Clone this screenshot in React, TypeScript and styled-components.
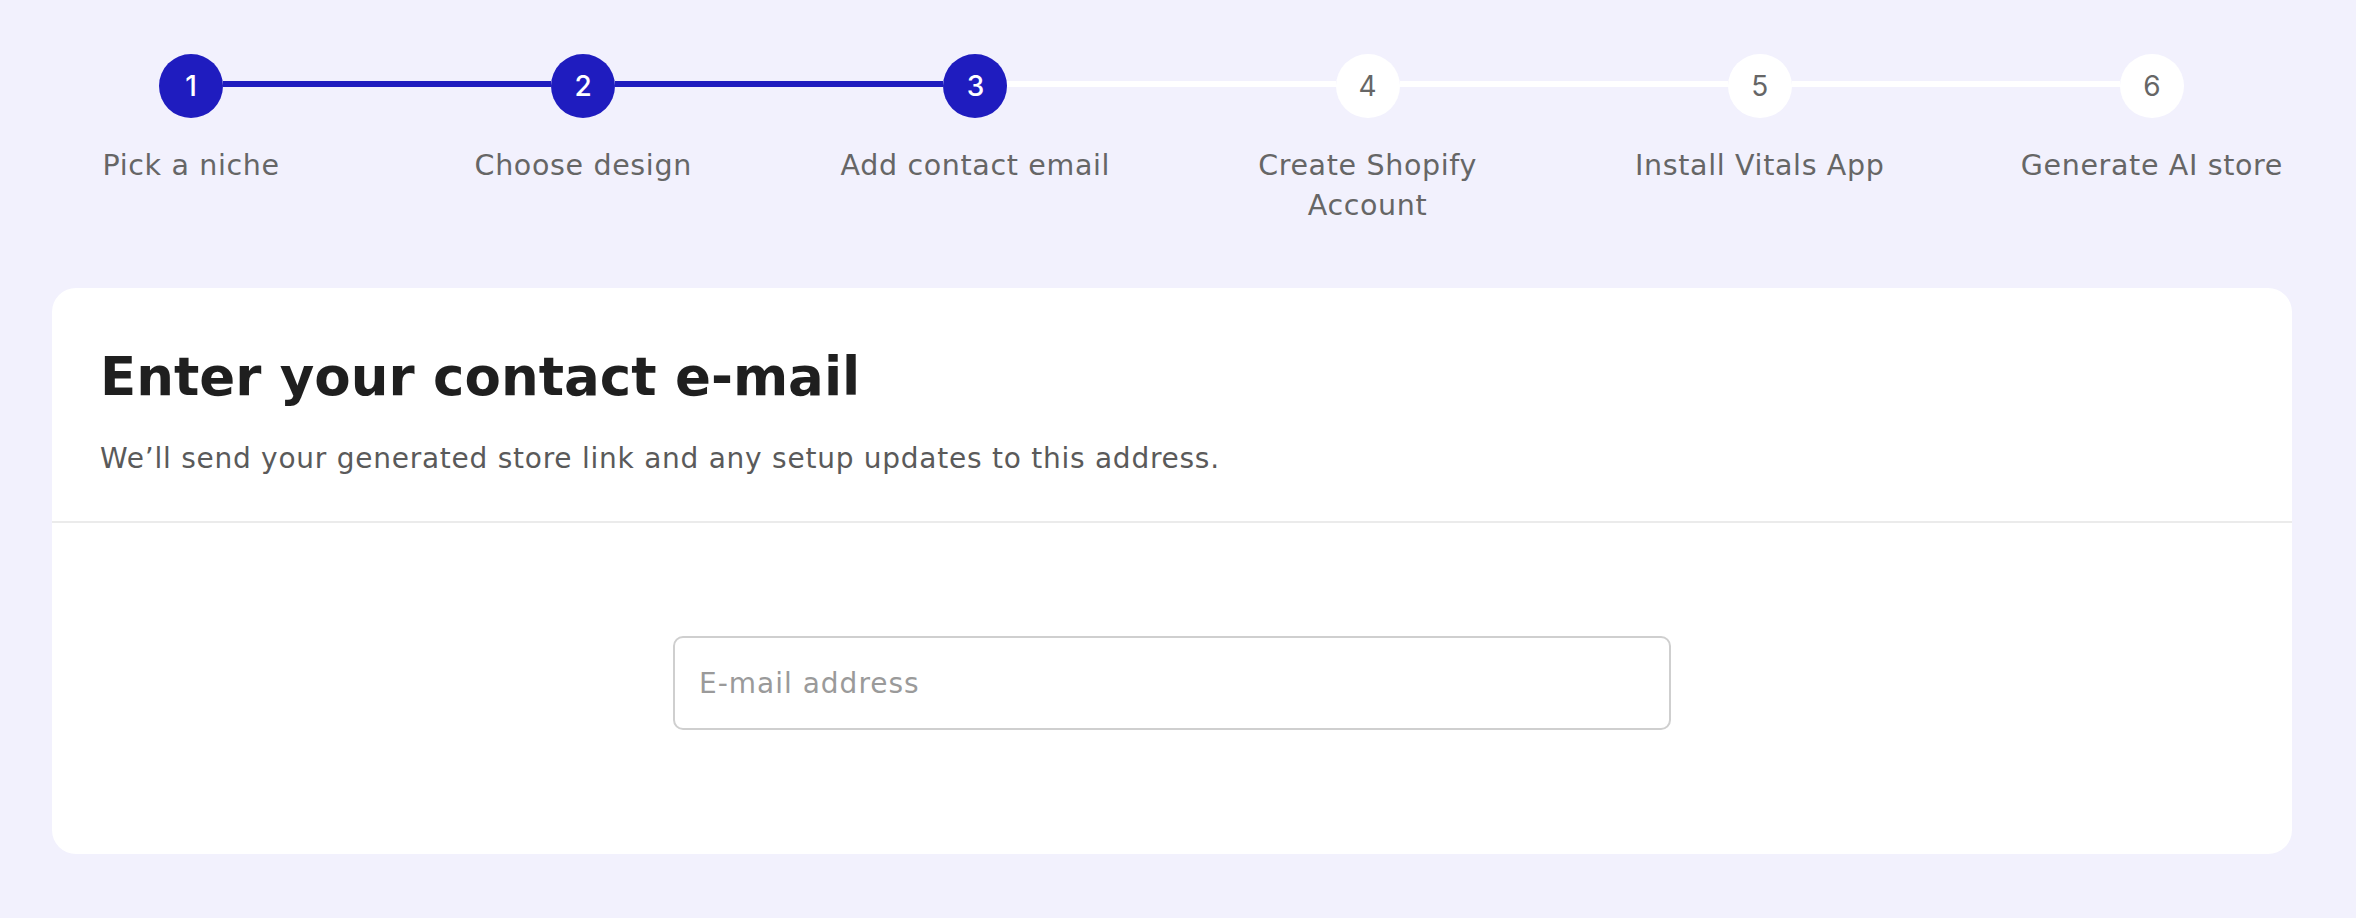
import React from "react";
import styled, { createGlobalStyle } from "styled-components";

const Global = createGlobalStyle`
  html, body { margin: 0; padding: 0; background: #F2F1FD; }
  body { font-family: "DejaVu Sans", "Noto Sans", sans-serif; }
  * { box-sizing: border-box; }
`;

const Page = styled.main`
  min-height: 918px;
  padding-top: 54px;
  padding-bottom: 64px;
`;

const Stepper = styled.ol`
  list-style: none;
  margin: 0 8px 0 -5px;
  padding: 0;
  display: grid;
  grid-template-columns: repeat(6, 1fr);
`;

const Step = styled.li`
  display: flex;
  flex-direction: column;
  align-items: center;
`;

const Track = styled.div`
  display: flex;
  align-self: stretch;
  align-items: flex-start;
`;

type Tone = "done" | "todo" | "none";

const Segment = styled.span<{ $tone: Tone }>`
  flex: 1;
  height: 6px;
  margin-top: 27px;
  background: ${(p) =>
    p.$tone === "done" ? "#1F1CBF" : p.$tone === "todo" ? "#FFFFFF" : "transparent"};
`;

const Dot = styled.span<{ $active: boolean }>`
  flex: none;
  width: 64px;
  height: 64px;
  border-radius: 50%;
  display: flex;
  align-items: center;
  justify-content: center;
  background: ${(p) => (p.$active ? "#1F1CBF" : "#FFFFFF")};
  color: ${(p) => (p.$active ? "#FFFFFF" : "#666666")};
  font-family: Inter, "DejaVu Sans", sans-serif;
  font-size: 28px;
  font-weight: ${(p) => (p.$active ? 500 : 400)};
`;

const Label = styled.span`
  margin-top: 28px;
  max-width: 330px;
  min-height: 80px;
  text-align: center;
  font-size: 28.5px;
  letter-spacing: 0.65px;
  line-height: 40px;
  color: #666666;
`;

const Card = styled.section`
  margin: 62px 64px 0 52px;
  background: #FFFFFF;
  border-radius: 24px;
  overflow: hidden;
`;

const CardHeader = styled.header`
  padding: 57px 48px 42px;
  border-bottom: 2px solid #EBEBEB;
`;

const Title = styled.h1`
  margin: 0;
  font-size: 53px;
  line-height: 64px;
  font-weight: 700;
  color: #1F1F1F;
`;

const Subtitle = styled.p`
  margin: 30px 0 0;
  font-size: 28px;
  letter-spacing: 0.75px;
  line-height: 40px;
  color: #5A5A5A;
`;

const CardBody = styled.div`
  padding: 113px 48px 124px;
  display: flex;
  justify-content: center;
`;

const EmailInput = styled.input`
  width: 998px;
  height: 94px;
  border: 2px solid #CFCFCF;
  border-radius: 10px;
  padding: 0 24px;
  font-family: inherit;
  font-size: 28px;
  letter-spacing: 1px;
  color: #333333;
  background: #FFFFFF;
  outline: none;
  &::placeholder {
    color: #9A9A9A;
  }
`;

const steps = [
  "Pick a niche",
  "Choose design",
  "Add contact email",
  "Create Shopify Account",
  "Install Vitals App",
  "Generate AI store",
];

const current = 3;

export default function App() {
  return (
    <>
      <Global />
      <Page>
        <Stepper>
          {steps.map((label, i) => {
            const n = i + 1;
            const left: Tone = i === 0 ? "none" : n <= current ? "done" : "todo";
            const right: Tone =
              i === steps.length - 1 ? "none" : n + 1 <= current ? "done" : "todo";
            return (
              <Step key={label}>
                <Track>
                  <Segment $tone={left} />
                  <Dot $active={n <= current}>{n}</Dot>
                  <Segment $tone={right} />
                </Track>
                <Label>{label}</Label>
              </Step>
            );
          })}
        </Stepper>
        <Card>
          <CardHeader>
            <Title>Enter your contact e-mail</Title>
            <Subtitle>
              We’ll send your generated store link and any setup updates to this address.
            </Subtitle>
          </CardHeader>
          <CardBody>
            <EmailInput type="email" placeholder="E-mail address" />
          </CardBody>
        </Card>
      </Page>
    </>
  );
}
